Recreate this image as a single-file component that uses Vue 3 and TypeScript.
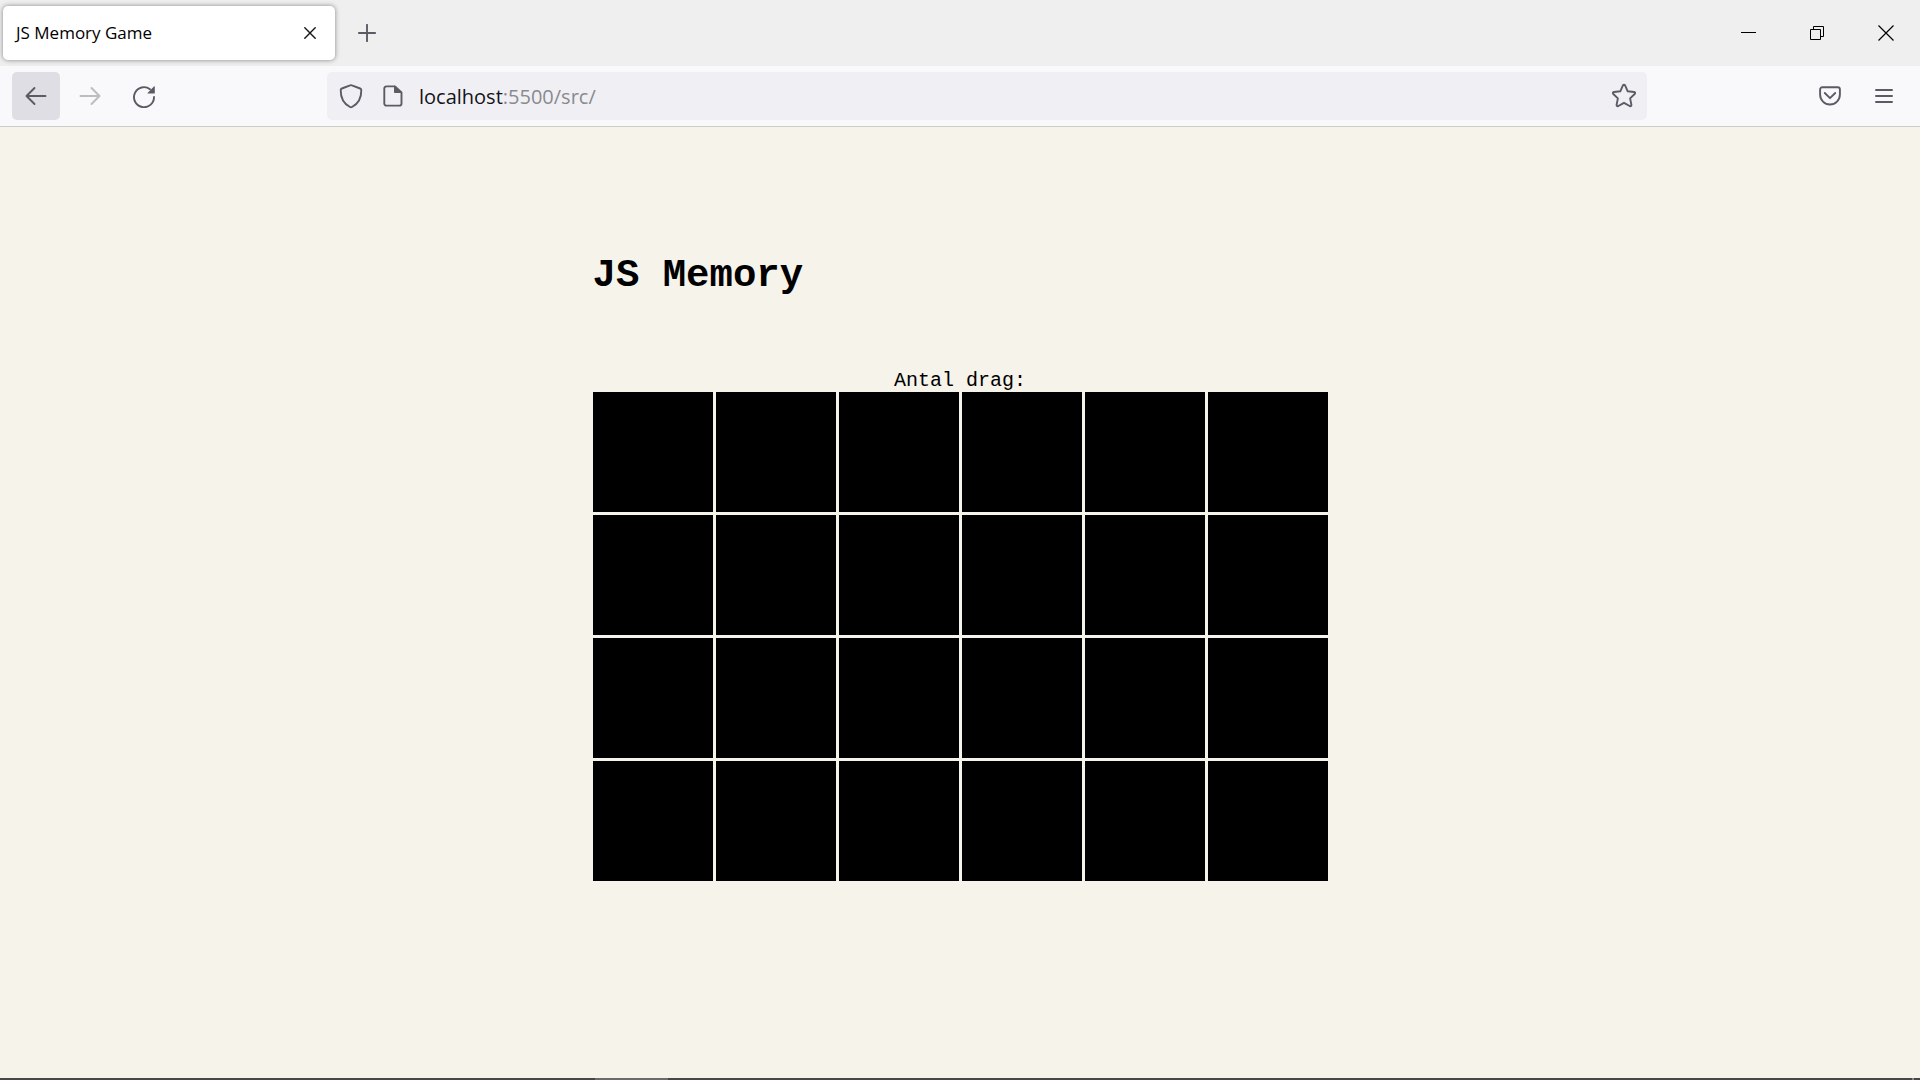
<script setup lang="ts">
import { ref } from 'vue'

const address = ref('/src/')
const rows = 4
const columns = 6
const cards = Array.from({ length: rows * columns }, (_, i) => i + 1)
</script>

<template>
  <div class="window">
    <header>
      <div class="tabs">
        <div class="tab">
          <span class="tab-title">JS Memory Game</span>
          <button class="tab-close" type="button" aria-label="Close tab">
            <svg width="12" height="12" viewBox="0 0 12 12"><path d="M.8.8l10.4 10.4M11.200.8L.8 11.200" stroke="#15141a" stroke-width="1.400" stroke-linecap="round" /></svg>
          </button>
        </div>
        <button class="new-tab" type="button" aria-label="New tab">
          <svg width="18" height="18" viewBox="0 0 18 18"><path d="M9 .8v16.400M.8 9h16.400" stroke="#5b5b66" stroke-width="1.900" stroke-linecap="round" /></svg>
        </button>
        <div class="window-controls">
          <button type="button" aria-label="Minimize">
            <svg width="16" height="16" viewBox="0 0 16 16"><path d="M1 7.500h15" stroke="#000" /></svg>
          </button>
          <button type="button" aria-label="Restore">
            <svg width="16" height="16" viewBox="0 0 16 16" fill="none" stroke="#000"><path d="M1.500 4.500h10v10h-10zM4.500 4.500v-3h10v10h-3" /></svg>
          </button>
          <button type="button" aria-label="Close">
            <svg width="16" height="16" viewBox="0 0 16 16"><path d="M.5.5l15 15M15.500.5l-15 15" stroke="#000" stroke-width="1.200" /></svg>
          </button>
        </div>
      </div>

      <nav class="toolbar">
        <div class="nav-buttons">
          <button class="tool active" type="button" aria-label="Back">
            <svg width="22" height="20" viewBox="0 0 22 20" fill="none" stroke="#5b5b66" stroke-width="1.900" stroke-linecap="round" stroke-linejoin="round"><path d="M20.500 10H1.500M9.500 2l-8 8 8 8" /></svg>
          </button>
          <button class="tool" type="button" aria-label="Forward" disabled>
            <svg width="22" height="20" viewBox="0 0 22 20" fill="none" stroke="#bcbcc1" stroke-width="1.900" stroke-linecap="round" stroke-linejoin="round"><path d="M1.500 10h19M12.500 2l8 8-8 8" /></svg>
          </button>
          <button class="tool" type="button" aria-label="Reload">
            <svg width="24" height="24" viewBox="0 0 24 24"><path d="M22 13A10 10 0 1 1 18 5.200" fill="none" stroke="#5b5b66" stroke-width="1.900" stroke-linecap="round" /><path d="M22.800 2.600v6.300q0 .6-.6.6h-6.300q-.8 0-.3-.6l6.300-6.300q.7-.6.9 0z" fill="#5b5b66" /></svg>
          </button>
        </div>
        <form class="url-bar" @submit.prevent>
          <svg class="shield" width="24" height="26" viewBox="0 0 24 26" fill="none" stroke="#5b5b66" stroke-width="1.900" stroke-linejoin="round"><path d="M11.100 2.300q.9-.4 1.800 0l8.200 3.200q1.200.5 1.200 1.700C22.400 14.500 20.200 20.200 13 24q-1 .5-2 0C3.800 20.200 1.600 14.500 1.700 7.200q0-1.200 1.200-1.700z" /></svg>
          <svg class="page-icon" width="20" height="22" viewBox="0 0 20 22"><path d="M12 1.400H3.500a2.200 2.200 0 0 0-2.200 2.200v14.800a2.200 2.200 0 0 0 2.200 2.200h12.800a2.200 2.200 0 0 0 2.200-2.200V7.500z" fill="none" stroke="#5b5b66" stroke-width="1.900" stroke-linejoin="round" /><path d="M11.500 1v6.500h7z" fill="#5b5b66" stroke="#5b5b66" stroke-linejoin="round" /></svg>
          <label class="address" for="address">localhost<span>:5500</span></label>
          <input id="address" v-model="address" type="text" />
          <button class="bookmark" type="button" aria-label="Bookmark this page">
            <svg width="26" height="26" viewBox="0 0 26 26" fill="none" stroke="#5b5b66" stroke-width="1.900" stroke-linejoin="round"><path d="M11.800 2.600q1.200-1.800 2.400 0l2.500 5.700 6.300.7q1.900.5.700 2l-4.600 4.400 1.300 6.300q.1 2-1.700 1.300L13 19.800 7.300 23q-1.800.7-1.700-1.300l1.300-6.300L2.300 11q-1.200-1.500.7-2l6.300-.7z" /></svg>
          </button>
        </form>
        <div class="actions">
          <button class="tool" type="button" aria-label="Save to Pocket">
            <svg width="22" height="20" viewBox="0 0 22 20" fill="none" stroke="#5b5b66" stroke-width="1.900" stroke-linecap="round" stroke-linejoin="round"><path d="M3.300 1.200h15.400a2.200 2.200 0 0 1 2.200 2.200v5.200a9.900 9.900 0 0 1-19.800 0V3.400a2.200 2.200 0 0 1 2.200-2.200zM5.800 7l5.200 5.200L16.200 7" /></svg>
          </button>
          <button class="tool" type="button" aria-label="Open application menu">
            <svg width="18" height="16" viewBox="0 0 18 16" stroke="#5b5b66" stroke-width="2" stroke-linecap="round"><path d="M1 2h16M1 8h16M1 14h16" /></svg>
          </button>
        </div>
      </nav>
    </header>

    <main>
      <section class="game">
        <h1>JS Memory</h1>
        <p>Antal drag:</p>
        <div class="board">
          <button v-for="card in cards" :key="card" class="card" type="button" :aria-label="`Kort ${card}`"></button>
        </div>
      </section>
    </main>

    <footer class="taskbar">
      <span class="running-app"></span>
      <span class="show-desktop"></span>
    </footer>
  </div>
</template>

<style>
body {
  margin: 0;
  background: #f6f3eb;
}
</style>

<style scoped>
.window {
  display: flex;
  flex-direction: column;
  min-height: 100vh;
  font-family: "Open Sans", "Noto Sans", sans-serif;
  color: #15141a;
}

button {
  display: flex;
  align-items: center;
  justify-content: center;
  padding: 0;
  border: 0;
  background: none;
}

.tabs {
  display: flex;
  align-items: center;
  height: 66px;
  padding-left: 3px;
  background: #efefef;
}

.tab {
  display: flex;
  align-items: center;
  justify-content: space-between;
  box-sizing: border-box;
  width: 332px;
  height: 54px;
  padding: 0 12px 0 13px;
  border-radius: 5px;
  background: #fff;
  box-shadow: 0 0 5px rgba(0, 0, 0, 0.45);
}

.tab-title {
  font-size: 17px;
  line-height: 24px;
  color: #000;
}

.tab-close {
  width: 26px;
  height: 26px;
}

.new-tab {
  width: 48px;
  height: 48px;
  margin-left: 8px;
}

.window-controls {
  display: flex;
  margin-left: auto;
}

.window-controls button {
  width: 69px;
  height: 66px;
}

.toolbar {
  display: flex;
  align-items: center;
  height: 60px;
  padding: 0 12px;
  border-bottom: 1px solid #cccccf;
  background: #f9f9fb;
}

.nav-buttons,
.actions {
  display: flex;
  flex: 1 0 auto;
  gap: 6px;
}

.actions {
  justify-content: flex-end;
}

.tool {
  width: 48px;
  height: 48px;
  border-radius: 5px;
}

.active {
  background: #dedee4;
}

.url-bar {
  display: flex;
  align-items: center;
  box-sizing: border-box;
  width: 1320px;
  height: 48px;
  padding: 0 10px 0 12px;
  border-radius: 5px;
  background: #f0f0f4;
}

.page-icon {
  margin: 0 16px 0 20px;
}

.address,
.url-bar input {
  padding: 2px 0 0;
  font-family: inherit;
  font-size: 20px;
  line-height: 28px;
}

.address span,
.url-bar input {
  color: #8a8a8f;
}

.url-bar input {
  flex: 1;
  min-width: 0;
  border: 0;
  outline: 0;
  background: none;
}

main {
  flex: 1;
  background: #f6f3eb;
  font-family: "Liberation Mono", "Courier New", monospace;
  color: #000;
}

.game {
  width: max-content;
  margin: 0 auto;
  padding: 126px 0;
}

h1 {
  margin: 0;
  font-size: 39px;
  line-height: 46px;
}

p {
  margin: 70px 0 0;
  font-size: 20px;
  line-height: 23px;
  text-align: center;
}

.board {
  display: grid;
  grid-template-columns: repeat(6, 120px);
  grid-auto-rows: 120px;
  gap: 3px;
}

.card {
  background: #000;
}

.taskbar {
  display: flex;
  justify-content: space-between;
  height: 2px;
  padding: 0 6px 0 31%;
  background: #4a4548;
}

.running-app {
  width: 73px;
  background: #6e696c;
}

.show-desktop {
  width: 2px;
  background: #8a8688;
}
</style>
